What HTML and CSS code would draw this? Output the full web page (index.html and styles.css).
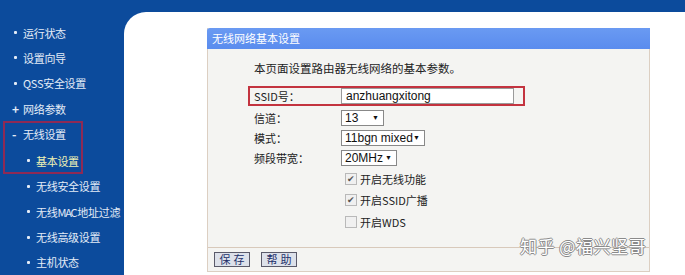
FILE: index.html
```html
<!DOCTYPE html>
<html lang="zh-CN">
<head>
<meta charset="utf-8">
<title>无线网络基本设置</title>
<link rel="stylesheet" href="styles.css">
</head>
<body>
<div class="frame">
  <nav class="sidebar">
    <div class="item"><span class="dot"></span>运行状态</div>
    <div class="item"><span class="dot"></span>设置向导</div>
    <div class="item"><span class="dot"></span>QSS安全设置</div>
    <div class="item"><span class="sign">+</span>网络参数</div>
    <div class="group">
      <div class="item"><span class="sign">-</span>无线设置</div>
      <div class="item sub active"><span class="dot"></span>基本设置</div>
    </div>
    <div class="item sub"><span class="dot"></span>无线安全设置</div>
    <div class="item sub"><span class="dot"></span>无线<span class="narrow">MAC</span>地址过滤</div>
    <div class="item sub"><span class="dot"></span>无线高级设置</div>
    <div class="item sub"><span class="dot"></span>主机状态</div>
  </nav>
  <main class="content">
    <section class="panel">
      <div class="panel-head">无线网络基本设置</div>
      <div class="panel-body">
        <p class="intro">本页面设置路由器无线网络的基本参数。</p>
        <div class="form">
          <div class="row ssid">
            <span class="label">SSID号：</span>
            <span class="input">anzhuangxitong</span>
          </div>
          <div class="row">
            <span class="label">信道：</span>
            <span class="select w-ch">13<span class="arrow">▼</span></span>
          </div>
          <div class="row">
            <span class="label">模式：</span>
            <span class="select w-mode">11bgn mixed<span class="arrow">▼</span></span>
          </div>
          <div class="row">
            <span class="label">频段带宽：</span>
            <span class="select w-bw">20MHz<span class="arrow">▼</span></span>
          </div>
          <div class="row check">
            <span class="label"></span>
            <span class="box checked">✔</span><span class="ctext">开启无线功能</span>
          </div>
          <div class="row check">
            <span class="label"></span>
            <span class="box checked">✔</span><span class="ctext">开启SSID广播</span>
          </div>
          <div class="row check">
            <span class="label"></span>
            <span class="box"></span><span class="ctext">开启WDS</span>
          </div>
        </div>
      </div>
      <div class="panel-foot">
        <span class="btn">保存</span>
        <span class="btn">帮助</span>
      </div>
    </section>
  </main>
</div>
<div class="watermark">知乎 @福兴坚哥</div>
</body>
</html>
```
FILE: styles.css
```css
html, body {
  margin: 0;
  padding: 0;
}
body {
  width: 685px;
  height: 275px;
  overflow: hidden;
  background: #0c4b9c;
  font-family: "Noto Sans CJK SC", "Liberation Sans", sans-serif;
  position: relative;
}
.frame {
  display: flex;
  height: 275px;
}
.sidebar {
  width: 124px;
  flex: none;
  padding-top: 20px;
  display: flex;
  flex-direction: column;
  color: #e3ebf7;
  font-size: 11px;
  letter-spacing: -0.3px;
  overflow: hidden;
}
.item {
  height: 26.33px;
  display: flex;
  align-items: center;
  padding-left: 12px;
  white-space: nowrap;
}
.item.sub {
  padding-left: 25px;
}
.item.active {
  color: #eef2b4;
}
.narrow {
  letter-spacing: -1.2px;
  margin-right: 1px;
}
.dot {
  flex: none;
  width: 3px;
  height: 3px;
  background: #e3ebf7;
  border-radius: 1px;
  margin-left: 2px;
  margin-right: 6px;
}
.sign {
  flex: none;
  width: 11px;
  font-weight: bold;
  font-size: 12px;
  line-height: 1;
}
.group {
  margin-left: 3px;
  width: 80px;
  box-shadow: inset 0 0 0 2px #8e2a55;
}
.group .item {
  padding-left: 9px;
}
.group .item.sub {
  padding-left: 22px;
}
.content {
  flex: 1;
  margin-top: 12px;
  background: #ffffff;
  border-top-left-radius: 22px;
  padding-left: 83px;
  padding-top: 16px;
}
.panel {
  width: 441px;
  height: 243px;
  background: #f4f4f2;
  border: 1px solid #dccfc2;
  border-top: none;
  display: flex;
  flex-direction: column;
}
.panel-head {
  height: 21px;
  margin: 0 -1px;
  background: linear-gradient(#6a9af2, #5a8cee);
  border-top-left-radius: 3px;
  color: #ffffff;
  font-size: 11px;
  line-height: 21px;
  padding-left: 5px;
}
.panel-body {
  flex: 1;
  padding-left: 40px;
}
.intro {
  margin: 11px 0 0 6px;
  font-size: 11.5px;
  line-height: 16px;
  color: #222;
}
.form {
  margin-top: 10px;
  display: flex;
  flex-direction: column;
}
.row {
  height: 20px;
  display: flex;
  align-items: center;
  padding-left: 6px;
  font-size: 11px;
  color: #222;
}
.row.ssid {
  width: 269px;
  border: 2px solid #c3333f;
  padding-left: 4px;
  height: 16px;
  margin-bottom: 2px;
}
.row.check {
  height: 21.5px;
}
.label {
  width: 87px;
  flex: none;
}
.input {
  width: 167px;
  height: 14px;
  border: 1px solid #9a9a9a;
  background: #fff;
  padding-left: 4px;
  font-family: "Liberation Sans", sans-serif;
  font-size: 12px;
  line-height: 14px;
  color: #111;
}
.select {
  height: 14px;
  border: 1px solid #888;
  background: #fff;
  padding-left: 3px;
  font-family: "Liberation Sans", sans-serif;
  font-size: 12px;
  line-height: 14px;
  color: #111;
  display: flex;
  align-items: center;
}
.arrow {
  font-size: 7px;
  margin-left: auto;
  padding-right: 4px;
}
.w-ch { width: 38px; }
.w-mode { width: 79px; }
.w-bw { width: 51px; }
.box {
  flex: none;
  width: 10px;
  height: 10px;
  border: 1px solid #b9b9b9;
  background: #f0f0f0;
  margin-left: 4px;
  margin-right: 3px;
  font-size: 9px;
  line-height: 10px;
  color: #555;
  text-align: center;
}
.ctext {
  font-size: 11px;
}
.panel-foot {
  height: 23px;
  border-top: 1px solid #d8c9bb;
  display: flex;
  align-items: center;
  gap: 11px;
  padding-left: 6px;
}
.btn {
  width: 34px;
  height: 13px;
  border: 1px solid #5a5a6a;
  background: #dde1ea;
  font-size: 11px;
  line-height: 13px;
  text-align: center;
  letter-spacing: 3px;
  text-indent: 3px;
  color: #23306a;
}
.watermark {
  position: absolute;
  left: 520px;
  top: 236px;
  font-size: 17px;
  line-height: 20px;
  color: #ffffff;
  letter-spacing: 0.5px;
  text-shadow: 1px 0 0 #8a8a8a, -1px 0 0 #8a8a8a, 0 1px 0 #8a8a8a, 0 -1px 0 #8a8a8a;
}
```
